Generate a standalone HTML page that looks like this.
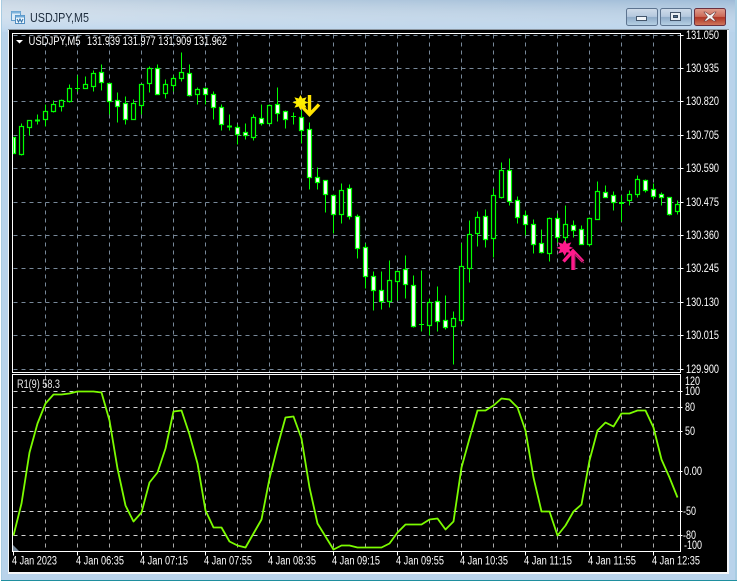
<!DOCTYPE html>
<html><head><meta charset="utf-8"><title>USDJPY,M5</title>
<style>
html,body{margin:0;padding:0;background:#fff;width:738px;height:582px;overflow:hidden}
svg{display:block}
text{font-family:"Liberation Sans",sans-serif;font-size:11.500px;fill:#fff}
.c{shape-rendering:crispEdges}
</style></head><body>
<svg width="738" height="582" viewBox="0 0 738 582" xmlns="http://www.w3.org/2000/svg">
<defs>
<linearGradient id="tb" x1="0" y1="0" x2="1" y2="0"><stop offset="0" stop-color="#c8d6e4"/><stop offset=".35" stop-color="#b4cade"/><stop offset="1" stop-color="#9fbcd8"/></linearGradient>
<linearGradient id="tv" x1="0" y1="0" x2="0" y2="1"><stop offset="0" stop-color="#fff" stop-opacity="0"/><stop offset="1" stop-color="#bcd6ee" stop-opacity=".95"/></linearGradient>
<linearGradient id="bt" x1="0" y1="0" x2="0" y2="1"><stop offset="0" stop-color="#d0dcea"/><stop offset=".48" stop-color="#b4c8de"/><stop offset=".52" stop-color="#8fabc8"/><stop offset="1" stop-color="#b8d2e6"/></linearGradient>
<linearGradient id="cl" x1="0" y1="0" x2="0" y2="1"><stop offset="0" stop-color="#e0a090"/><stop offset=".48" stop-color="#cc6a58"/><stop offset=".52" stop-color="#b03424"/><stop offset="1" stop-color="#d07a60"/></linearGradient>
</defs>
<!-- window frame -->
<rect width="738" height="582" fill="#fff"/>
<rect x="1" y="0" width="736" height="581" fill="#1f8f9f"/>
<rect x="1" y="0" width="736" height="580" fill="#a8cce2"/>
<rect x="2" y="0" width="733" height="580" fill="#b9d3eb"/>
<rect x="2" y="0" width="733" height="32" fill="url(#tb)"/>
<rect x="2" y="0" width="733" height="32" fill="url(#tv)"/>
<!-- client -->
<rect x="8" y="29" width="721" height="545" fill="#f4f6f8"/>
<rect x="8" y="29" width="721" height="1" fill="#8c96a0"/>
<rect x="9" y="30" width="718" height="542" fill="#000"/>
<!-- title icon -->
<g class="c">
<rect x="11.5" y="11.5" width="9" height="9" fill="#dcecf8" stroke="#5f9ccc"/>
<rect x="11.5" y="11.5" width="9" height="2" fill="#7fb4dc"/>
<rect x="15.5" y="15.5" width="9" height="8" fill="#eef6fc" stroke="#4f8cc0"/>
<rect x="15.5" y="15.5" width="9" height="2" fill="#6faad8"/>
</g>
<path d="M17 19l1.500 3 1.500-3 1.500 3 1.500-3" fill="none" stroke="#2d6fa8" stroke-width="1"/>
<text x="30" y="22" style="font-size:13px;fill:#1d2c3d" textLength="59" lengthAdjust="spacingAndGlyphs">USDJPY,M5</text>
<!-- window buttons -->
<rect x="626.500" y="8.500" width="31" height="17" rx="2" fill="url(#bt)" stroke="#5d7490"/>
<rect x="660.500" y="8.500" width="31" height="17" rx="2" fill="url(#bt)" stroke="#5d7490"/>
<rect x="694.500" y="8.500" width="31" height="17" rx="2" fill="url(#cl)" stroke="#6a3040"/>
<rect x="636.500" y="16.500" width="10" height="4" fill="#f0f4f8" stroke="#44566c"/>
<rect x="670.500" y="12.500" width="10" height="8" fill="#e8eef4" stroke="#44566c"/>
<rect x="673.500" y="15.500" width="4" height="2" fill="#52708e" stroke="#33465c"/>
<path d="M705.500 12l4.500 3 4.500-3h1.500l-3.500 5 3.500 4h-2.500l-3.500-2.500-3.500 2.500h-2.500l3.500-4-3.500-5z" fill="#f4f4f4" stroke="#6a3a3a" stroke-width=".6"/>

<g transform="translate(.5 .5)" fill="none">
<!-- grid -->
<g class="c" stroke="#778899" stroke-dasharray="4 4">
<path d="M13 35H680M13 68H680M13 101H680M13 135H680M13 168H680M13 202H680M13 235H680M13 268H680M13 302H680M13 335H680M13 369H680"/>
<path d="M45 34V372M77 34V372M109 34V372M141 34V372M173 34V372M205 34V372M237 34V372M269 34V372M301 34V372M333 34V372M365 34V372M397 34V372M429 34V372M461 34V372M493 34V372M525 34V372M557 34V372M589 34V372M621 34V372M653 34V372"/>
<path stroke="#a9a9a9" d="M45 375V551M77 375V551M109 375V551M141 375V551M173 375V551M205 375V551M237 375V551M269 375V551M301 375V551M333 375V551M365 375V551M397 375V551M429 375V551M461 375V551M493 375V551M525 375V551M557 375V551M589 375V551M621 375V551M653 375V551"/>
<path stroke="#d3d3d3" d="M13 391H680M13 407H680M13 431H680M13 471H680M13 511H680M13 535H680"/>
</g>
<!-- wicks and dojis -->
<path stroke="#0f0" stroke-width="1" d="M21 123V155M29 120V135M37 114V124M34.500 119.500h5M34.500 120.500h5M45 104V126M53 100V112M61 99V111M69 84V102M77 75V91M74.500 88h5M85 76V88M93 70V91M101 64V90M109 83V114M117 92V122M125 96V124M133 99V119M141 84V114M149 66V92M157 64V94M165 79V98M173 75V91M181 52V81M189 64V96M197 87V104M205 87V104M213 91V119M221 104V130M229 114V130M226.500 125.500h5M226.500 126.500h5M237 124V144M245 123V139M253 114V140M261 104V125M269 104V123M277 87V121M285 110V128M293 112V124M290.500 116h5M301 110V143M309 122V189M317 167V189M325 180V212M333 194V233M341 183V223M349 184V219M357 214V258M365 243V288M373 271V310M381 271V309M389 260V307M397 271V300M405 255V298M413 275V327M421 270V331M418.500 324h5M429 298V335M437 286V331M445 295V329M453 311V364M461 243V324M469 220V282M477 211V246M485 209V247M493 188V257M501 162V198M509 158V205M517 196V223M525 210V235M533 219V253M541 229V253M549 217V261M557 213V242M565 205V245M573 220V237M581 225V244M589 217V246M597 181V219M605 185V197M613 191V210M621 195V221M618.500 202h5M618.500 203h5M629 190V205M637 175V197M645 179V192M653 183V199M661 192V205M669 197V215M677 200V214"/>
<!-- black bodies -->
<path stroke="#0f0" stroke-width="1.200" fill="#000" d="M19 126h4V154h-4zM27 120h4V127h-4zM43 111h4V119h-4zM51 104h4V111h-4zM59 100h4V106h-4zM67 88h4V101h-4zM83 84h4V88h-4zM91 73h4V86h-4zM131 103h4V119h-4zM139 84h4V105h-4zM147 68h4V83h-4zM163 84h4V93h-4zM171 78h4V85h-4zM179 72h4V78h-4zM195 89h4V94h-4zM251 117h4V137h-4zM267 105h4V123h-4zM339 190h4V214h-4zM387 280h4V301h-4zM395 271h4V281h-4zM427 302h4V325h-4zM451 318h4V326h-4zM459 266h4V320h-4zM467 234h4V268h-4zM475 217h4V233h-4zM491 195h4V238h-4zM499 170h4V197h-4zM547 218h4V253h-4zM563 224h4V237h-4zM587 218h4V244h-4zM595 191h4V219h-4zM627 194h4V200h-4zM635 179h4V194h-4zM675 204h4V211h-4z"/>
<!-- white bodies -->
<path stroke="#0f0" stroke-width="1.200" fill="#fff" d="M13 137h2V153h-2zM99 72h4V82h-4zM107 83h4V101h-4zM115 100h4V106h-4zM123 103h4V119h-4zM155 68h4V94h-4zM187 73h4V95h-4zM203 88h4V94h-4zM211 94h4V107h-4zM219 107h4V124h-4zM235 127h4V134h-4zM243 132h4V135h-4zM259 118h4V123h-4zM275 104h4V113h-4zM283 111h4V119h-4zM299 117h4V130h-4zM307 129h4V177h-4zM315 177h4V182h-4zM323 180h4V194h-4zM331 195h4V214h-4zM347 188h4V216h-4zM355 216h4V248h-4zM363 247h4V276h-4zM371 276h4V290h-4zM379 290h4V301h-4zM403 269h4V284h-4zM411 285h4V326h-4zM435 301h4V321h-4zM443 320h4V327h-4zM483 216h4V239h-4zM507 170h4V201h-4zM515 200h4V217h-4zM523 215h4V224h-4zM531 224h4V244h-4zM539 243h4V252h-4zM555 218h4V237h-4zM571 225h4V230h-4zM579 229h4V244h-4zM603 192h4V197h-4zM611 195h4V202h-4zM643 180h4V190h-4zM651 189h4V196h-4zM659 194h4V197h-4zM667 197h4V214h-4z"/>
<!-- RSI line -->
<path stroke="#7cfc00" stroke-width="1.800" stroke-linejoin="round" d="M13 535L21 503 29 452 37 423 45 403 53 394H61L69 393 77 391 85 391H93L101 392 109 420 117 468 125 505 133 521 141 512 149 482 157 472 165 448 173 411 181 410 189 434 197 463 205 510 213 527H221L229 541 237 545 245 547 253 533 261 519 269 478 277 446 285 417 293 416 301 438 309 487 317 523 325 536 333 549 341 545H349L357 547H381L389 543 397 532 405 524H421L429 519 437 518 445 529 453 521 461 467 469 438 477 410H485L493 405 501 398 509 399 517 407 525 430 533 477 541 511H549L557 535 565 525 573 511 581 504 589 460 597 430 605 422 613 426 621 413H629L637 410H645L653 427 661 459 669 477 677 497"/>
<!-- pane borders and ticks -->
<path class="c" stroke="#fff" d="M12 33H680V372H12ZM12 374H680V551H12ZM680 35h3M680 68h3M680 101h3M680 135h3M680 168h3M680 202h3M680 235h3M680 268h3M680 302h3M680 335h3M680 369h3M680 391h2M680 407h2M680 431h2M680 471h2M680 511h2M680 535h2M13 551v4M77 551v4M141 551v4M205 551v4M269 551v4M333 551v4M397 551v4M461 551v4M525 551v4M589 551v4M653 551v4"/>
</g>
<path d="M13 545l6 6h-6z" fill="#778899"/>
<!-- yellow marker -->
<path d="M300.500 95l1.800 3.500 4.300-1.300-1.900 3.800 3.900 1.500-3.900 1.500 1.900 3.800-4.300-1.300-1.800 3.700-1.800-3.700-4.300 1.300 1.900-3.800-3.900-1.500 3.900-1.500-1.900-3.800 4.300 1.300z" fill="#ffee00"/>
<path d="M309.500 95V114M300.500 105L309.500 114.500 319 104.500" fill="none" stroke="#ffe400" stroke-width="3.400"/>
<!-- pink marker -->
<path d="M564.700 240l2 3.800 4.600-1.400-2.100 4 3.800 1.500-3.800 1.600 2.100 4-4.600-1.400-2 3.900-2-3.900-4.600 1.400 2.100-4-3.800-1.600 3.800-1.500-2.100-4 4.600 1.400z" fill="#ff1a8c"/>
<path d="M573 270V251M563.500 261.500L573 251 583 261.500" fill="none" stroke="#ff1a8c" stroke-width="3.400"/>
<path d="M575 254L584 263M575 255V270" fill="none" stroke="#96205c" stroke-width="1"/>
<!-- header text -->
<path d="M16 40h7l-3.500 3.500z" fill="#fff"/>
<text x="28.500" y="45" textLength="52" lengthAdjust="spacingAndGlyphs">USDJPY,M5</text>
<text x="87" y="45" textLength="140" lengthAdjust="spacingAndGlyphs">131.939 131.977 131.909 131.962</text>
<text x="17" y="388" textLength="43" lengthAdjust="spacingAndGlyphs" style="fill:#e8e8e8">R1(9) 58.3</text>
<!-- price labels -->
<g>
<text x="686" y="39" textLength="33" lengthAdjust="spacingAndGlyphs">131.050</text>
<text x="686" y="72" textLength="33" lengthAdjust="spacingAndGlyphs">130.935</text>
<text x="686" y="105" textLength="33" lengthAdjust="spacingAndGlyphs">130.820</text>
<text x="686" y="139" textLength="33" lengthAdjust="spacingAndGlyphs">130.705</text>
<text x="686" y="172" textLength="33" lengthAdjust="spacingAndGlyphs">130.590</text>
<text x="686" y="206" textLength="33" lengthAdjust="spacingAndGlyphs">130.475</text>
<text x="686" y="239" textLength="33" lengthAdjust="spacingAndGlyphs">130.360</text>
<text x="686" y="272" textLength="33" lengthAdjust="spacingAndGlyphs">130.245</text>
<text x="686" y="306" textLength="33" lengthAdjust="spacingAndGlyphs">130.130</text>
<text x="686" y="339" textLength="33" lengthAdjust="spacingAndGlyphs">130.015</text>
<text x="686" y="373" textLength="33" lengthAdjust="spacingAndGlyphs">129.900</text>
<text x="685" y="385" textLength="15" lengthAdjust="spacingAndGlyphs">120</text>
<text x="685" y="395" textLength="15" lengthAdjust="spacingAndGlyphs">100</text>
<text x="685" y="411" textLength="10" lengthAdjust="spacingAndGlyphs">80</text>
<text x="685" y="435" textLength="10" lengthAdjust="spacingAndGlyphs">50</text>
<text x="684" y="475" textLength="18" lengthAdjust="spacingAndGlyphs">0.00</text>
<text x="683" y="515" textLength="13" lengthAdjust="spacingAndGlyphs">-50</text>
<text x="683" y="539" textLength="13" lengthAdjust="spacingAndGlyphs">-80</text>
<text x="684" y="549" textLength="18" lengthAdjust="spacingAndGlyphs">-100</text>
</g>
<!-- date labels -->
<g>
<text x="12" y="564.500" textLength="45" lengthAdjust="spacingAndGlyphs">4 Jan 2023</text>
<text x="76" y="564.500" textLength="48" lengthAdjust="spacingAndGlyphs">4 Jan 06:35</text>
<text x="140" y="564.500" textLength="48" lengthAdjust="spacingAndGlyphs">4 Jan 07:15</text>
<text x="204" y="564.500" textLength="48" lengthAdjust="spacingAndGlyphs">4 Jan 07:55</text>
<text x="268" y="564.500" textLength="48" lengthAdjust="spacingAndGlyphs">4 Jan 08:35</text>
<text x="332" y="564.500" textLength="48" lengthAdjust="spacingAndGlyphs">4 Jan 09:15</text>
<text x="396" y="564.500" textLength="48" lengthAdjust="spacingAndGlyphs">4 Jan 09:55</text>
<text x="460" y="564.500" textLength="48" lengthAdjust="spacingAndGlyphs">4 Jan 10:35</text>
<text x="524" y="564.500" textLength="48" lengthAdjust="spacingAndGlyphs">4 Jan 11:15</text>
<text x="588" y="564.500" textLength="48" lengthAdjust="spacingAndGlyphs">4 Jan 11:55</text>
<text x="652" y="564.500" textLength="48" lengthAdjust="spacingAndGlyphs">4 Jan 12:35</text>
</g>
</svg>
</body></html>
